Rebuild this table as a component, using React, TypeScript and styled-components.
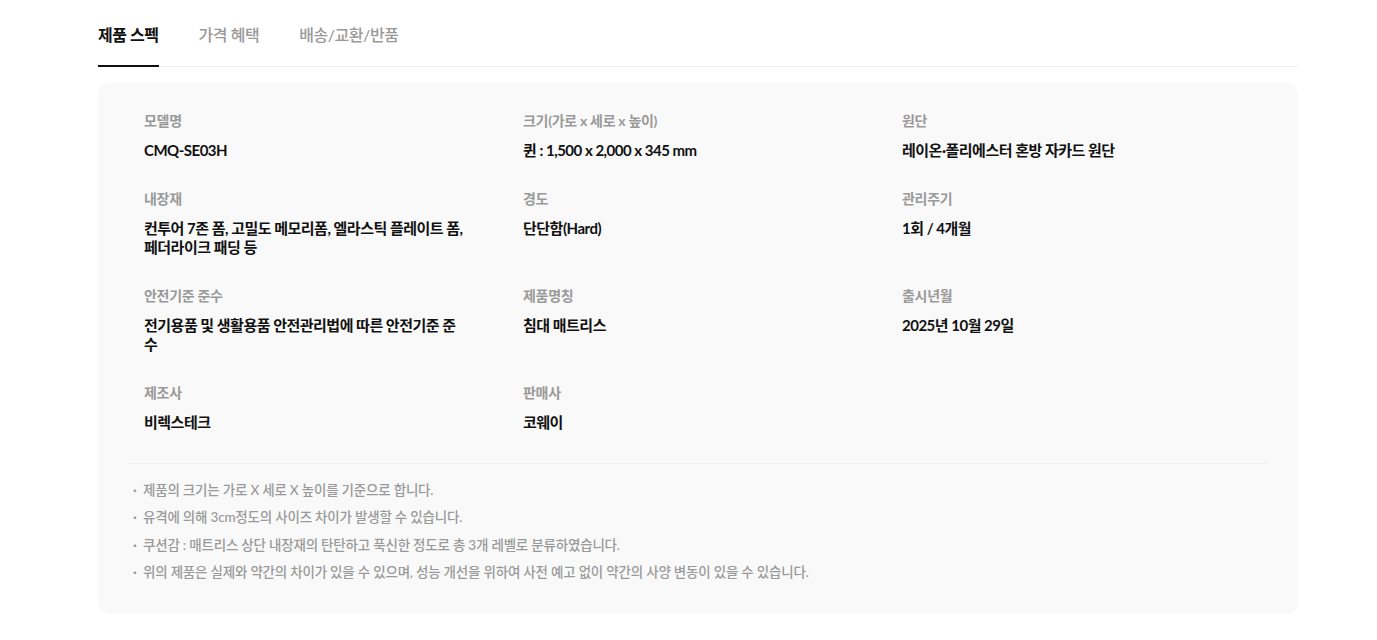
import React, { useState } from "react";
import styled, { createGlobalStyle } from "styled-components";

const GlobalStyle = createGlobalStyle`
  body {
    margin: 0;
    background: #fff;
    font-family: "Lato", "Noto Sans CJK KR", sans-serif;
    color: #111;
  }
`;

interface Spec {
  label: string;
  value: string;
}

const specs: Spec[] = [
  { label: "모델명", value: "CMQ-SE03H" },
  { label: "크기(가로 x 세로 x 높이)", value: "퀸 : 1,500 x 2,000 x 345 mm" },
  { label: "원단", value: "레이온·폴리에스터 혼방 자카드 원단" },
  {
    label: "내장재",
    value: "컨투어 7존 폼, 고밀도 메모리폼, 엘라스틱 플레이트 폼, 페더라이크 패딩 등"
  },
  { label: "경도", value: "단단함(Hard)" },
  { label: "관리주기", value: "1회 / 4개월" },
  {
    label: "안전기준 준수",
    value: "전기용품 및 생활용품 안전관리법에 따른 안전기준 준수"
  },
  { label: "제품명칭", value: "침대 매트리스" },
  { label: "출시년월", value: "2025년 10월 29일" },
  { label: "제조사", value: "비렉스테크" },
  { label: "판매사", value: "코웨이" }
];

const notes = [
  "제품의 크기는 가로 X 세로 X 높이를 기준으로 합니다.",
  "유격에 의해 3cm정도의 사이즈 차이가 발생할 수 있습니다.",
  "쿠션감 : 매트리스 상단 내장재의 탄탄하고 푹신한 정도로 총 3개 레벨로 분류하였습니다.",
  "위의 제품은 실제와 약간의 차이가 있을 수 있으며, 성능 개선을 위하여 사전 예고 없이 약간의 사양 변동이 있을 수 있습니다."
];

const tabs = ["제품 스펙", "가격 혜택", "배송/교환/반품"];

const Page = styled.div`
  width: 1200px;
  padding: 17px 0 28px 98px;
`;

const TabBar = styled.div`
  display: flex;
  gap: 40px;
  border-bottom: 1px solid #eeeeee;
  margin-bottom: 16px;
`;

const Tab = styled.button<{ $active: boolean }>`
  background: none;
  border: 0;
  padding: 6px 0 18px;
  margin-bottom: -1px;
  font-family: inherit;
  font-size: 16px;
  line-height: 24px;
  letter-spacing: -0.45px;
  font-weight: ${p => (p.$active ? 700 : 500)};
  color: ${p => (p.$active ? "#111" : "#999")};
  border-bottom: 2px solid ${p => (p.$active ? "#111" : "transparent")};
  cursor: pointer;
`;

const Panel = styled.section`
  background: #f9f9f9;
  border-radius: 12px;
  padding: 28px 30px 28px;
`;

const SpecGrid = styled.dl`
  display: grid;
  grid-template-columns: repeat(3, 379px);
  row-gap: 28px;
  margin: 0;
  padding: 0 16px 31px;
  border-bottom: 1px solid #efefef;
`;

const Cell = styled.div`
  padding-right: 57px;
`;

const Label = styled.dt`
  font-size: 14px;
  line-height: 20px;
  font-weight: 700;
  letter-spacing: -0.3px;
  color: #999;
  margin-bottom: 10px;
`;

const Value = styled.dd`
  margin: 0;
  font-size: 15px;
  line-height: 19.5px;
  font-weight: 700;
  letter-spacing: -0.5px;
  word-break: break-all;
  color: #111;
`;

const NoteList = styled.ul`
  list-style: none;
  margin: 0;
  padding: 13px 0 0 5px;
`;

const Note = styled.li`
  font-size: 13.5px;
  line-height: 27.3px;
  color: #999;
  font-weight: 500;
  letter-spacing: -0.2px;

  &::before {
    content: "·";
    display: inline-block;
    width: 10px;
    font-weight: 700;
  }
`;

export default function App() {
  const [active, setActive] = useState(0);

  return (
    <Page>
      <GlobalStyle />
      <TabBar>
        {tabs.map((t, i) => (
          <Tab key={t} $active={i === active} onClick={() => setActive(i)}>
            {t}
          </Tab>
        ))}
      </TabBar>
      <Panel>
        <SpecGrid>
          {specs.map(s => (
            <Cell key={s.label}>
              <Label>{s.label}</Label>
              <Value>{s.value}</Value>
            </Cell>
          ))}
        </SpecGrid>
        <NoteList>
          {notes.map(n => (
            <Note key={n}>{n}</Note>
          ))}
        </NoteList>
      </Panel>
    </Page>
  );
}
